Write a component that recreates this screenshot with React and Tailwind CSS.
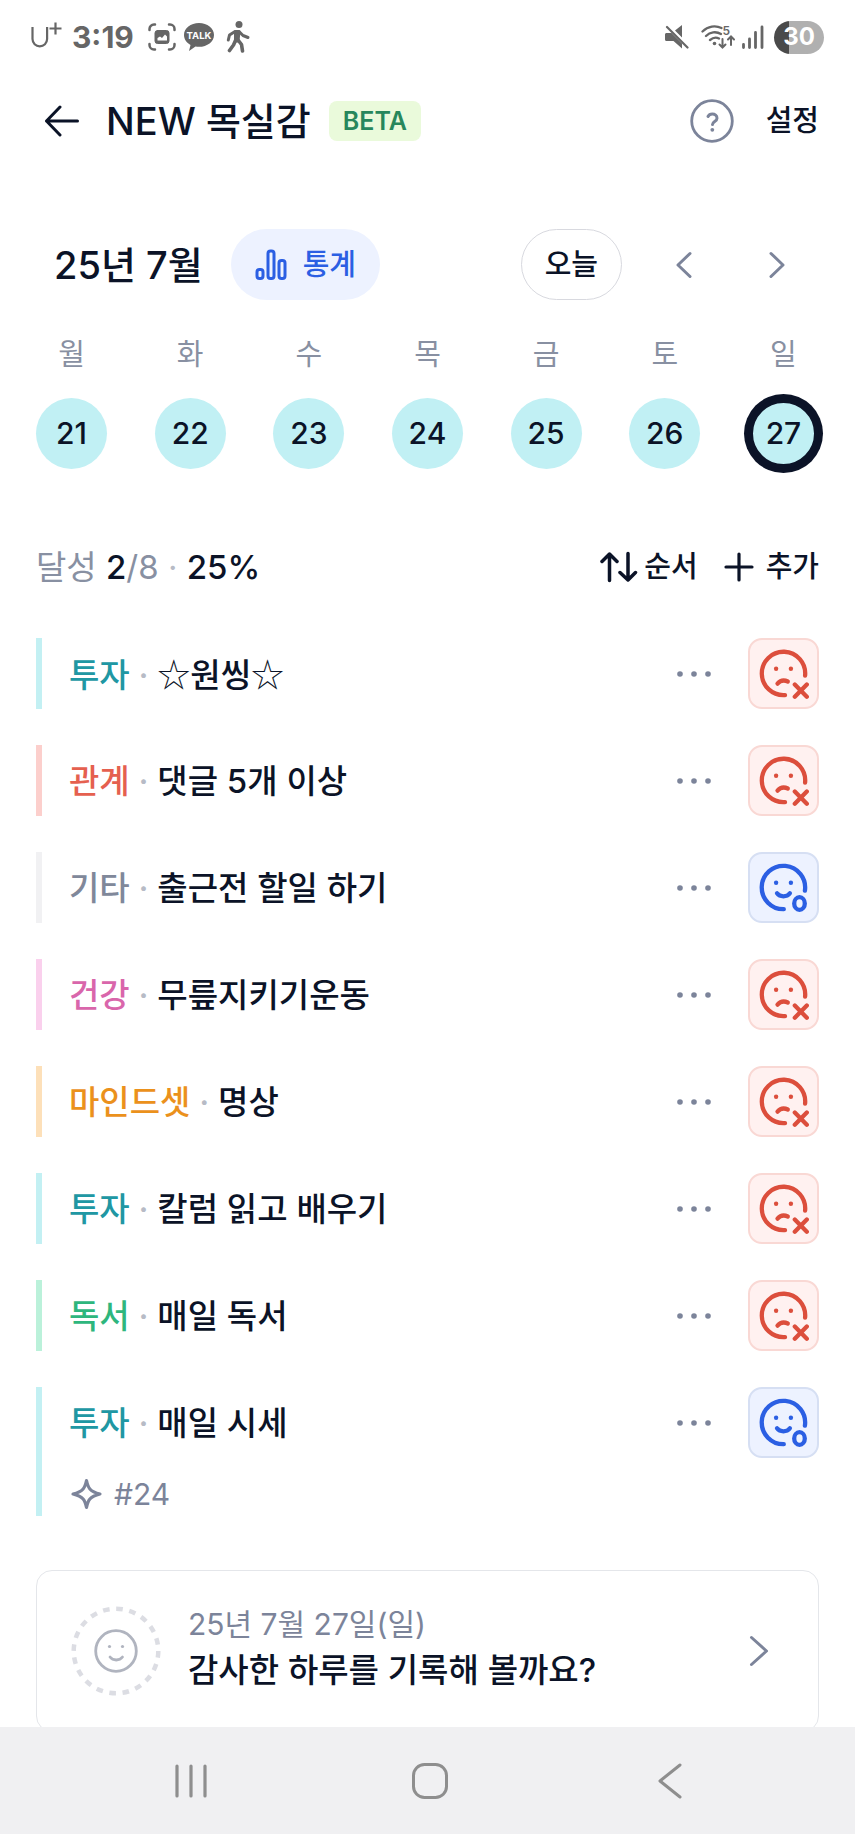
const DAYS = [
  { label: "월", date: 21 },
  { label: "화", date: 22 },
  { label: "수", date: 23 },
  { label: "목", date: 24 },
  { label: "금", date: 25 },
  { label: "토", date: 26 },
  { label: "일", date: 27, selected: true },
];

const GOALS = [
  { category: "투자", title: "☆원씽☆", text: "text-[#2097a3]", bar: "border-[#c3f0f3]" },
  { category: "관계", title: "댓글 5개 이상", text: "text-[#e5604f]", bar: "border-[#fccfcc]" },
  { category: "기타", title: "출근전 할일 하기", text: "text-[#80889a]", bar: "border-[#f1f1f3]", done: true },
  { category: "건강", title: "무릎지키기운동", text: "text-[#d966ab]", bar: "border-[#fad0ed]" },
  { category: "마인드셋", title: "명상", text: "text-[#eb911c]", bar: "border-[#fde0b9]" },
  { category: "투자", title: "칼럼 읽고 배우기", text: "text-[#2097a3]", bar: "border-[#c3f0f3]" },
  { category: "독서", title: "매일 독서", text: "text-[#2eb67d]", bar: "border-[#bbf1da]" },
  { category: "투자", title: "매일 시세", text: "text-[#2097a3]", bar: "border-[#c3f0f3]", done: true, tag: "#24" },
];

function StatusBar() {
  return (
    <div className="flex h-[74px] shrink-0 items-center justify-between pl-[30px] pr-[31px] text-[#666]">
      <div className="flex items-center">
        <svg width="32" height="30" viewBox="0 0 32 30" fill="none" stroke="currentColor" strokeWidth="2.200">
          <path d="M2.500 5v12a7.300 7.300 0 0 0 14.600 0V5M19.500 6.500h12M25.500.5v12" />
        </svg>
        <span className="ml-2.5 text-[30px] font-bold leading-9">3:19</span>
        <svg className="ml-3.5" width="28" height="28" viewBox="0 0 28 28" fill="none" stroke="currentColor" strokeWidth="2.500" strokeLinecap="round">
          <path d="M1.500 7V6A4.500 4.500 0 0 1 6 1.500h1M21 1.500h1A4.500 4.500 0 0 1 26.500 6v1M26.500 21v1a4.500 4.500 0 0 1-4.500 4.500h-1M7 26.500H6A4.500 4.500 0 0 1 1.500 22v-1" />
          <rect x="7" y="7.500" width="14" height="13" rx="2.500" fill="currentColor" strokeWidth="1" />
          <path d="M9.500 17.500v-2.500l2.500-1.500 2 1.500 3-3.500 2 2v4z" fill="#fff" stroke="none" />
        </svg>
        <svg className="ml-2" width="30" height="28" viewBox="0 0 30 28" fill="currentColor">
          <path d="M15 0C6.700 0 0 5.300 0 12c0 4.200 2.600 7.800 6.500 10L5 28l6.500-4.500c1.100.2 2.300.3 3.500.3 8.300 0 15-5.300 15-11.900S23.300 0 15 0z" />
          <text x="15" y="15.500" textAnchor="middle" fontSize="9.500" fontWeight="700" fill="#fff">TALK</text>
        </svg>
        <svg className="ml-3" width="24" height="32" viewBox="0 0 24 32" fill="none" stroke="currentColor" strokeLinecap="round" strokeLinejoin="round">
          <circle cx="13" cy="3.500" r="3.500" fill="currentColor" stroke="none" />
          <path d="M9.500 10.500h3.500l-1 9.500h-2.500z" fill="currentColor" strokeWidth="3" />
          <path d="M9 10.500l-5.500 3.500-1.200 5M13 10.500l4 4 5 2" strokeWidth="3" />
          <path d="M9.500 19.500L7.500 24l-4 5.500M12 19l3.500 4.500 1 6.500" strokeWidth="3.600" />
        </svg>
      </div>
      <div className="flex items-center">
        <svg width="24" height="24" viewBox="0 0 24 24" fill="currentColor">
          <path d="M0 9.500C0 8.500.8 8 1.500 8h5L17 18.500v5L8.500 16h-7C.5 16 0 15.300 0 14.500zM10 5.500L17 0v12.500z" />
          <path d="M2 2l20.500 20.500" stroke="currentColor" strokeWidth="2.200" strokeLinecap="round" />
        </svg>
        <svg className="ml-3" width="35" height="26" viewBox="0 0 35 26" fill="none" stroke="currentColor" strokeWidth="2.300" strokeLinecap="round">
          <path d="M1.500 7.500C7 2 14.500 1 20.500 4M5 12c4-4 10-5 15-2M9 16c3-2.500 6-3 9-1.500" />
          <circle cx="13.500" cy="19.500" r="1.800" fill="currentColor" stroke="none" />
          <path d="M21.500 15v8.500M18.500 20.500l3 3 3-3M30 21v-8.500M27 15.500l3-3 3 3" strokeWidth="2" />
          <text x="21.500" y="10.500" fontSize="12" fontWeight="600" fill="currentColor" stroke="none">5</text>
        </svg>
        <svg className="ml-1.5" width="22" height="24" viewBox="0 0 22 24" stroke="currentColor" strokeWidth="2.800" strokeLinecap="round">
          <path d="M1.500 19.500v3M7.500 14v8.500M13.500 7.500v15M20 2v20.500" />
        </svg>
        <div className="ml-2.5 flex h-[33px] w-[50px] items-center justify-center rounded-full bg-linear-to-r from-[#4a4a4a] from-30% to-[#b0b0b0] to-30% text-2xl font-bold leading-none text-white">
          30
        </div>
      </div>
    </div>
  );
}

function Header() {
  return (
    <header className="flex h-[94px] shrink-0 items-center px-9">
      <button type="button" aria-label="뒤로" className="ml-2">
        <svg width="36" height="32" viewBox="0 0 36 32" fill="none" stroke="currentColor" strokeWidth="3" strokeLinecap="round" strokeLinejoin="round">
          <path d="M16 2L2.500 16 16 30M2.500 16h31" />
        </svg>
      </button>
      <h1 className="ml-[26px] text-[38px] font-medium leading-[44px]">NEW 목실감</h1>
      <span className="ml-[18px] flex h-10 items-center rounded-lg bg-[#eafadb] px-3.5 text-[25px] font-semibold leading-8 text-[#27875c]">
        BETA
      </span>
      <button type="button" aria-label="도움말" className="ml-auto text-[#7c849a]">
        <svg width="44" height="44" viewBox="0 0 44 44" fill="none" stroke="currentColor" strokeLinecap="round" strokeLinejoin="round">
          <circle cx="22" cy="22" r="20.300" strokeWidth="2.800" />
          <path d="M18 17.500c.8-1.700 2.500-2.500 4.300-2.500 2.600 0 4.700 1.600 4.700 4.200 0 3.300-4.500 3.300-4.500 6.300" strokeWidth="3" />
          <circle cx="22.300" cy="30.800" r="1.900" fill="currentColor" stroke="none" />
        </svg>
      </button>
      <button type="button" className="ml-8 text-[29px] font-medium leading-9">설정</button>
    </header>
  );
}

function Chevron({ direction, label }) {
  return (
    <button type="button" aria-label={label} className="flex h-[71px] w-[71px] items-center justify-center text-[#7c849a]">
      <svg width="18" height="28" viewBox="0 0 18 28" fill="none" stroke="currentColor" strokeWidth="3" strokeLinecap="round" strokeLinejoin="round">
        <path d={direction === "left" ? "M15 2.500L3 14l12 11.500" : "M3 2.500L15 14 3 25.500"} />
      </svg>
    </button>
  );
}

function Calendar() {
  return (
    <section className="mt-[61px]">
      <div className="flex items-center pl-[18px] pr-[7px]">
        <h2 className="text-[38px] font-medium leading-[44px]">25년 7월</h2>
        <button type="button" className="ml-7 flex h-[71px] items-center gap-4 rounded-full bg-[#edf2ff] px-6 text-[29px] font-medium leading-9 text-[#2b5fe3]">
          <svg width="32" height="32" viewBox="0 0 32 32" fill="none" stroke="currentColor" strokeWidth="3">
            <rect x="2" y="20.500" width="6" height="9" rx="2.500" />
            <rect x="13" y="2" width="6" height="27.500" rx="2.500" />
            <rect x="24" y="11.500" width="6" height="18" rx="2.500" />
          </svg>
          통계
        </button>
        <button type="button" className="ml-auto h-[71px] rounded-full border border-[#d8d9df] px-[23px] text-[29px] font-medium leading-9">
          오늘
        </button>
        <div className="ml-[26px] flex gap-[22px]">
          <Chevron direction="left" label="이전 주" />
          <Chevron direction="right" label="다음 주" />
        </div>
      </div>
      <div className="mt-[37px] flex justify-between">
        {DAYS.map((day) => (
          <div key={day.date} className="flex w-[71px] flex-col items-center gap-[25px]">
            <span className="text-[29px] leading-9 text-[#8890a2]">{day.label}</span>
            <button
              type="button"
              className={[
                "h-[71px] w-[71px] rounded-full bg-[#c1f0f4] text-[30px] font-medium",
                day.selected ? "border-[5px] border-[#0b1327] ring-4 ring-[#0b1327]" : "",
              ].join(" ")}
            >
              {day.date}
            </button>
          </div>
        ))}
      </div>
    </section>
  );
}

function Summary() {
  return (
    <div className="mt-[76px] flex h-11 items-center justify-between">
      <p className="text-[33px] font-medium leading-[44px]">
        <span className="font-normal text-[#8890a2]">달성 </span>2
        <span className="font-normal text-[#8890a2]">/8</span>
        <span className="font-normal text-[#b7bbc6]"> · </span>25%
      </p>
      <div className="flex items-center gap-[26px] text-[29px] font-medium leading-9">
        <button type="button" className="flex items-center gap-1.5">
          <svg width="38" height="32" viewBox="0 0 38 32" fill="none" stroke="currentColor" strokeWidth="3.500" strokeLinecap="round" strokeLinejoin="round">
            <path d="M2 10.500L9.500 3l7.500 7.500M9.500 3v26.500M20 21.500L28 29l7.500-7.500M28 29V2.500" />
          </svg>
          순서
        </button>
        <button type="button" className="flex items-center gap-3">
          <svg width="30" height="30" viewBox="0 0 30 30" fill="none" stroke="currentColor" strokeWidth="3.200" strokeLinecap="round">
            <path d="M15 2v26M2 15h26" />
          </svg>
          추가
        </button>
      </div>
    </div>
  );
}

function Face({ done }) {
  return (
    <svg className="shrink-0" width="51" height="51" viewBox="-1.5 -1.5 51 51" fill="none" stroke="currentColor" strokeWidth="4.300" strokeLinecap="round" strokeLinejoin="round">
      {done ? (
        <>
          <path d="M45.400 27.200A21.700 21.700 0 1 0 24.300 45.700" />
          <path d="M17.500 29.800c3 4 9.800 4 12.900 0" />
          <ellipse cx="40" cy="40" rx="5.300" ry="6.300" />
        </>
      ) : (
        <>
          <path d="M45.600 26A21.700 21.700 0 1 0 25.500 45.600" />
          <path d="M18 34.200c2.500-3 6.500-4 10.300-2.200" />
          <path d="M35.300 35l12 12.200M47.300 35l-12 12.200" />
        </>
      )}
      <circle cx="16.600" cy="19.300" r="2.200" fill="currentColor" stroke="none" />
      <circle cx="31.400" cy="19.300" r="2.200" fill="currentColor" stroke="none" />
    </svg>
  );
}

// stars are drawn from the Korean font, thin and full width
function GoalTitle({ title }) {
  return title.split(/(☆)/).map((part, index) =>
    part === "☆" ? (
      <span key={index} className="font-['Noto_Sans_CJK_KR',sans-serif] font-light">☆</span>
    ) : (
      part
    )
  );
}

function GoalItem({ goal }) {
  return (
    <li className={`border-l-[6px] pl-[27px] ${goal.bar}`}>
      <div className="flex h-[71px] items-center">
        <p className="text-[33px] font-medium leading-[44px]">
          <span className={goal.text}>{goal.category}</span>
          <span className="text-[#b7bbc6]"> · </span>
          <GoalTitle title={goal.title} />
        </p>
        <button type="button" aria-label="더보기" className="ml-auto mr-[37px] text-[#7c849a]">
          <svg width="34" height="34" viewBox="0 0 34 34" fill="currentColor">
            <circle cx="3" cy="17" r="2.800" />
            <circle cx="17" cy="17" r="2.800" />
            <circle cx="31" cy="17" r="2.800" />
          </svg>
        </button>
        <button
          type="button"
          aria-label={goal.done ? "완료" : "미완료"}
          className={[
            "flex h-[71px] w-[71px] items-center justify-center rounded-[14px] border-2",
            goal.done
              ? "border-[#d6dff3] bg-[#edf2ff] text-[#2b5fe3]"
              : "border-[#f9d8d4] bg-[#fff1f0] text-[#dc4e3c]",
          ].join(" ")}
        >
          <Face done={goal.done} />
        </button>
      </div>
      {goal.tag ? (
        <div className="flex h-[58px] items-start gap-3 pl-0.5 pt-[18px] text-[30px] leading-9 text-[#7c849a]">
          <svg className="mt-0.5" width="31" height="32" viewBox="0 0 31 32" fill="none" stroke="currentColor" strokeWidth="3.200" strokeLinejoin="round">
            <path d="M15.500 2.500C17 9.500 18.500 13.500 29 16c-10.500 2.500-12 6.500-13.500 13.500C14 22.500 12.500 18.500 2 16c10.500-2.500 12-6.500 13.500-13.500z" />
          </svg>
          {goal.tag}
        </div>
      ) : null}
    </li>
  );
}

function JournalCard() {
  return (
    <button type="button" className="mt-[54px] flex h-[162px] w-full shrink-0 items-center rounded-2xl border border-[#e4e6ea] pl-[33px] pr-[49px] text-left">
      <svg width="92" height="92" viewBox="0 0 92 92" fill="none">
        <circle cx="46" cy="46" r="42.300" stroke="#dcdde3" strokeWidth="4.500" strokeDasharray="6.640 6.640" />
        <circle cx="46" cy="46" r="20.300" stroke="#b0b4bf" strokeWidth="2.800" />
        <path d="M40 52c3 4 9.500 4 12.500 0" stroke="#b0b4bf" strokeWidth="2.800" strokeLinecap="round" />
        <circle cx="39.500" cy="41.500" r="1.600" fill="#b0b4bf" />
        <circle cx="52.500" cy="41.500" r="1.600" fill="#b0b4bf" />
      </svg>
      <span className="ml-[26px] flex flex-col pb-1.5">
        <span className="text-[30px] leading-[44px] text-[#7c849a]">25년 7월 27일(일)</span>
        <span className="text-[33px] font-medium leading-[48px]">감사한 하루를 기록해 볼까요?</span>
      </span>
      <svg className="ml-auto" width="20" height="32" viewBox="0 0 20 32" fill="none" stroke="#7c849a" strokeWidth="3" strokeLinecap="round" strokeLinejoin="round">
        <path d="M2.500 2.500L17.500 16l-15 13.500" />
      </svg>
    </button>
  );
}

function NavBar() {
  return (
    <nav className="grid h-[107px] shrink-0 grid-cols-3 items-center bg-[#f0f0f2] pl-[71px] pr-[65px] text-[#8e8e8e]">
      <button type="button" aria-label="최근 앱" className="flex justify-center">
        <svg width="34" height="36" viewBox="0 0 34 36" stroke="currentColor" strokeWidth="3.200" strokeLinecap="round">
          <path d="M3 3v30M17 3v30M31 3v30" />
        </svg>
      </button>
      <button type="button" aria-label="홈" className="flex justify-center">
        <svg width="38" height="38" viewBox="0 0 38 38" fill="none" stroke="currentColor" strokeWidth="3">
          <rect x="2.500" y="2.500" width="33" height="33" rx="11" />
        </svg>
      </button>
      <button type="button" aria-label="뒤로 가기" className="flex justify-center">
        <svg width="26" height="38" viewBox="0 0 26 38" fill="none" stroke="currentColor" strokeWidth="3" strokeLinecap="round" strokeLinejoin="round">
          <path d="M23 3L3 19l20 16" />
        </svg>
      </button>
    </nav>
  );
}

export default function App() {
  return (
    <div className="flex h-screen flex-col bg-white font-[Inter,'Noto_Sans_CJK_KR',sans-serif] text-[#0b1327]">
      <StatusBar />
      <Header />
      <main className="min-h-0 flex-1 overflow-hidden px-9">
        <Calendar />
        <Summary />
        <ul className="mt-[49px] flex flex-col gap-9">
          {GOALS.map((goal) => (
            <GoalItem key={goal.title} goal={goal} />
          ))}
        </ul>
        <JournalCard />
      </main>
      <NavBar />
    </div>
  );
}
